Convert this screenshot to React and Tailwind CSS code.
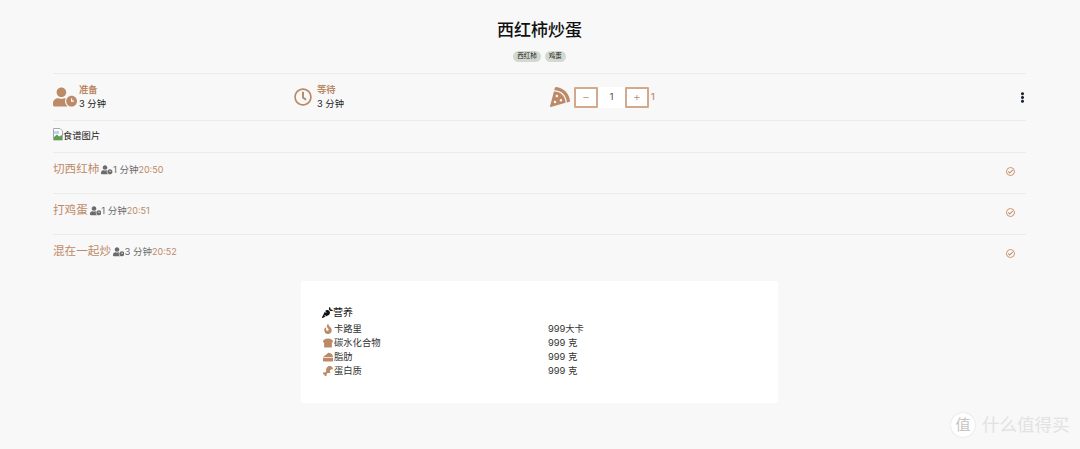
import React from "react";
import { FaUserClock, FaRegClock, FaPizzaSlice, FaCarrot, FaFire, FaBreadSlice, FaCheese, FaDrumstickBite, FaRegCheckCircle, FaEllipsisV } from "react-icons/fa";

function Step({ name, time, clock }) {
  return (
    <div className="flex h-[41px] items-start justify-between border-t border-[#ebebeb] pt-[8px]">
      <div className="flex items-center leading-[17px]">
        <span className="mr-[2px] text-[11.600px] text-[#bd8a67]">{name}</span>
        <FaUserClock className="text-[11.500px] text-[#6b6b6b]" />
        <span className="text-[9.500px] text-[#6b6b6b]">{time}</span>
        <span className="text-[9px] text-[#bd8a67]">{clock}</span>
      </div>
      <FaRegCheckCircle className="mr-[11px] mt-[6px] text-[9px] text-[#c4895f]" />
    </div>
  );
}

function Nutri({ icon, label, value }) {
  return (
    <div className="grid h-[14px] grid-cols-[226px_1fr] items-center text-[9.300px] leading-[14px] text-[#333]">
      <div className="flex items-center">
        <span className="flex w-[11px] justify-center text-[10px] text-[#bd8a67]">{icon}</span>
        <span className="ml-[1px]">{label}</span>
      </div>
      <span>{value}</span>
    </div>
  );
}

export default function App() {
  return (
    <div className="relative h-[449px] overflow-hidden bg-[#f8f8f8] font-['Inter','Noto_Sans_CJK_SC',sans-serif] text-[#212121]">
      <div className="mx-[53px] w-[973px]">
        <h1 className="pt-[18px] text-center text-[17px] font-medium leading-[24px] text-[#111]">西红柿炒蛋</h1>
        <div className="mt-[9px] flex h-[11px] justify-center gap-[4px]">
          <span className="rounded-full bg-[#d3d9d1] px-[4px] text-[6.500px] leading-[11px] text-[#222]">西红柿</span>
          <span className="rounded-full bg-[#d3d9d1] px-[4px] text-[6.500px] leading-[11px] text-[#222]">鸡蛋</span>
        </div>

        <div className="mt-[11px] grid h-[47px] grid-cols-[241px_256px_1fr] items-center border-t border-[#ebebeb]">
          <div className="flex items-center">
            <FaUserClock className="text-[24px] text-[#bd8a67]" />
            <div className="ml-[2px] text-[9.300px] leading-[14px]">
              <div className="font-semibold text-[#bd8a67]">准备</div>
              <div>3 分钟</div>
            </div>
          </div>
          <div className="flex items-center">
            <FaRegClock className="text-[18px] text-[#bd8a67]" />
            <div className="ml-[5px] text-[9.300px] leading-[14px]">
              <div className="font-semibold text-[#bd8a67]">等待</div>
              <div>3 分钟</div>
            </div>
          </div>
          <div className="flex items-center">
            <FaPizzaSlice className="text-[20px] text-[#bd8a67]" />
            <div className="ml-[4px] flex h-[21px] w-[75px] items-center bg-white">
              <span className="flex h-[21px] w-[24px] items-center justify-center rounded-[1px] border-2 border-[#d3a98d] text-[12px] font-light text-[#bd8a67]">−</span>
              <span className="flex-1 text-center text-[9px] text-[#444]">1</span>
              <span className="flex h-[21px] w-[24px] items-center justify-center rounded-[1px] border-2 border-[#d3a98d] text-[12px] font-light text-[#bd8a67]">+</span>
            </div>
            <span className="ml-[2px] text-[9px] font-medium text-[#bd8a67]">1</span>
            <FaEllipsisV className="ml-auto mr-[-2px] text-[11px] text-[#1a2433]" />
          </div>
        </div>

        <div className="flex h-[32px] items-start border-t border-[#ebebeb] pt-[8px] text-[9.300px] leading-[14px]">
          <svg width="10" height="13" viewBox="0 0 10 13" className="mt-[-1px] shrink-0">
            <path d="M.5.5h6.5l2.500 2.500v9h-9z" fill="#fff" stroke="#a9a9a9" />
            <path d="M1 12V9l3-2.500 2 2 3-1.500v5z" fill="#5da04f" />
            <path d="M1 3h5v3H1z" fill="#bcd3f5" />
          </svg>
          <span>食谱图片</span>
        </div>

        <Step name="切西红柿" time="1 分钟" clock="20:50" />
        <Step name="打鸡蛋" time="1 分钟" clock="20:51" />
        <Step name="混在一起炒" time="3 分钟" clock="20:52" />
      </div>

      <div className="ml-[301px] mt-[6px] h-[122px] w-[477px] rounded-[3px] bg-white pl-[21px] pt-[24px]">
        <div className="mb-[3px] flex h-[14px] items-center text-[10px] text-[#111]">
          <FaCarrot className="text-[11px] text-[#111]" />
          <span>营养</span>
        </div>
        <Nutri icon={<FaFire />} label="卡路里" value="999大卡" />
        <Nutri icon={<FaBreadSlice />} label="碳水化合物" value="999 克" />
        <Nutri icon={<FaCheese />} label="脂肪" value="999 克" />
        <Nutri icon={<FaDrumstickBite />} label="蛋白质" value="999 克" />
      </div>

      <div className="absolute left-[951px] top-[413px] flex items-center">
        <span className="flex h-[24px] w-[24px] items-center justify-center rounded-full bg-white text-[15px] text-[#c4c4c4] shadow-[0_0_2px_rgba(0,0,0,0.15)]">值</span>
        <span className="ml-[7px] text-[17.500px] leading-[24px] text-[#e2e2e2]">什么值得买</span>
      </div>
    </div>
  );
}
